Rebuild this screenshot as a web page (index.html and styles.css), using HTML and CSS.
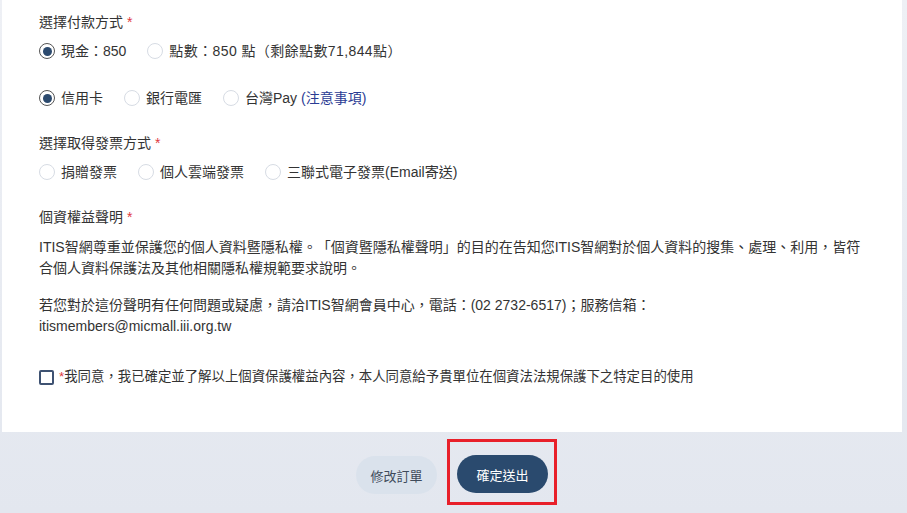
FILE: index.html
```html
<!DOCTYPE html>
<html lang="zh-TW">
<head>
  <meta charset="UTF-8">
  <meta name="viewport" content="width=device-width, initial-scale=1.0">
  <title>確認訂單</title>
  <link rel="stylesheet" href="styles.css">
</head>
<body>
  <div class="card">
    <div class="field-title">選擇付款方式 <span class="req">*</span></div>
    <div class="radio-row">
      <label class="radio"><span class="dot checked"></span><span>現金：850</span></label>
      <label class="radio"><span class="dot"></span><span class="points">點數：850 點（剩餘點數71,844點）</span></label>
    </div>
    <div class="radio-row row-gap">
      <label class="radio"><span class="dot checked"></span><span>信用卡</span></label>
      <label class="radio"><span class="dot"></span><span>銀行電匯</span></label>
      <label class="radio"><span class="dot"></span><span>台灣Pay <a class="note" href="#">(注意事項)</a></span></label>
    </div>

    <div class="field-title section">選擇取得發票方式 <span class="req">*</span></div>
    <div class="radio-row">
      <label class="radio"><span class="dot"></span><span>捐贈發票</span></label>
      <label class="radio"><span class="dot"></span><span>個人雲端發票</span></label>
      <label class="radio"><span class="dot"></span><span>三聯式電子發票(Email寄送)</span></label>
    </div>

    <div class="field-title section">個資權益聲明 <span class="req">*</span></div>
    <p class="privacy">ITIS智網尊重並保護您的個人資料暨隱私權。「個資暨隱私權聲明」的目的在告知您ITIS智網對於個人資料的搜集、處理、利用，皆符合個人資料保護法及其他相關隱私權規範要求說明。</p>
    <p class="privacy second">若您對於這份聲明有任何問題或疑慮，請洽ITIS智網會員中心，電話：(02 2732-6517)；服務信箱：<br>itismembers@micmall.iii.org.tw</p>

    <label class="agree"><span class="box"></span><span class="req">*</span>我同意，我已確定並了解以上個資保護權益內容，本人同意給予貴單位在個資法法規保護下之特定目的使用</label>
  </div>

  <div class="actions">
    <button class="btn btn-light">修改訂單</button>
    <span class="mark"><button class="btn btn-dark">確定送出</button></span>
  </div>
</body>
</html>
```

FILE: styles.css
```css
body {
  margin: 0;
  font-family: "Liberation Sans", "Noto Sans CJK TC", sans-serif;
  font-size: 14px;
  color: #333;
  background: linear-gradient(#eef0f5, #e3e7ef);
  min-height: 513px;
  text-spacing-trim: space-all;
}
.card {
  background: #fff;
  margin: 0 5px 0 2px;
  padding: 12px 37px 45px;
}
.field-title { line-height: 20px; height: 20px; }
.field-title.section { margin-top: 25px; }
.req { color: #e0383e; }
.radio-row { display: flex; margin-top: 9px; line-height: 20px; }
.radio-row.row-gap { margin-top: 27px; }
.radio { display: flex; align-items: center; margin-right: 21px; }
.points { letter-spacing: 0.4px; }
.dot {
  width: 16px; height: 16px;
  box-sizing: border-box;
  border: 1px solid #d7dce4;
  border-radius: 50%;
  margin-right: 6px;
  display: flex; align-items: center; justify-content: center;
}
.dot.checked { border: 1.5px solid #555; }
.dot.checked::after {
  content: "";
  width: 9px; height: 9px;
  border-radius: 50%;
  background: #2c4a6e;
}
.note { color: #2b3c94; text-decoration: none; }
.privacy { margin: 10px 0 0; line-height: 21px; }
.privacy.second { margin-top: 16px; }
.agree {
  display: flex;
  align-items: center;
  margin-top: 30px;
  line-height: 20px;
  font-size: 13.4px;
}
.box {
  width: 15px; height: 15px;
  box-sizing: border-box;
  border: 2px solid #3e5272;
  border-radius: 2px;
  margin-right: 5px;
}
.actions {
  display: flex;
  justify-content: center;
  align-items: flex-start;
  padding: 7px 0 0 6px;
}
.btn {
  border: none;
  height: 38px;
  border-radius: 19px;
  font-family: inherit;
  font-size: 13px;
  cursor: pointer;
}
.btn-light { background: #dae2ec; color: #3f4b5b; width: 81px; margin-top: 17px; margin-right: 10px; }
.btn-dark { background: #2a4a6e; color: #fff; width: 91px; }
.mark {
  display: block;
  border: 3px solid #e8202a;
  padding: 13px 6px 9px 7px;
}
```
